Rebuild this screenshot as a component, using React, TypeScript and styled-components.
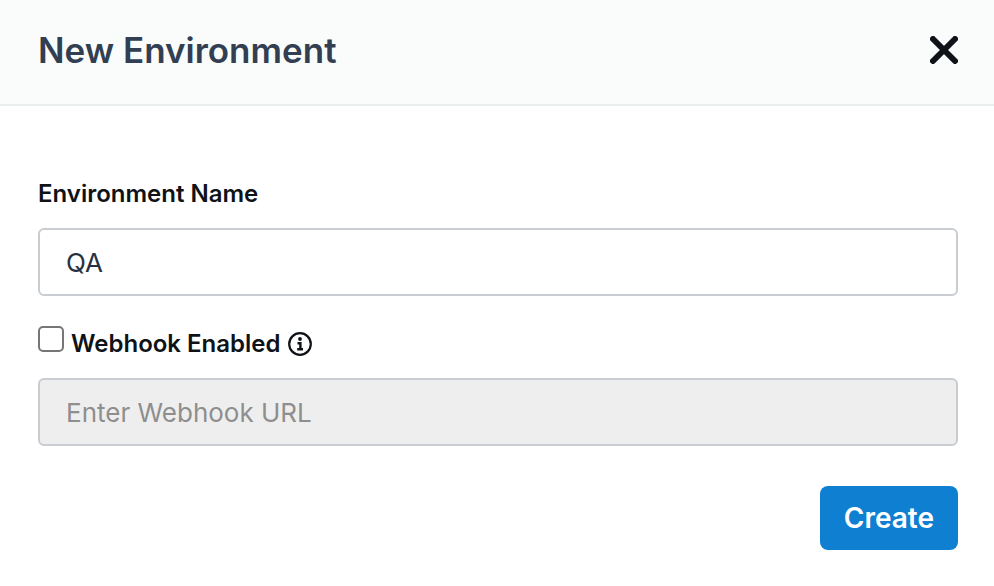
import React, { useState } from 'react';
import styled, { createGlobalStyle } from 'styled-components';

const GlobalStyle = createGlobalStyle`
  *, *::before, *::after { box-sizing: border-box; }
  body {
    margin: 0;
    background: #ffffff;
    color: #0f1317;
    font-family: Inter, "Liberation Sans", sans-serif;
  }
`;

const Dialog = styled.section`
  display: flex;
  flex-direction: column;
`;

const Header = styled.header`
  display: flex;
  align-items: center;
  justify-content: space-between;
  padding: 26px 36px 30px 38px;
  background: #fafcfc;
  border-bottom: 2px solid #ebeeee;
`;

const Title = styled.h1`
  margin: 0;
  font-size: 35px;
  line-height: 48px;
  font-weight: 600;
  color: #323f53;
`;

const CloseButton = styled.button`
  display: flex;
  padding: 0;
  border: 0;
  background: none;
  color: #0f1317;
  cursor: pointer;
`;

const Form = styled.form`
  display: flex;
  flex-direction: column;
  padding: 72px 36px 36px 38px;
`;

const Label = styled.label`
  font-size: 24px;
  line-height: 32px;
  font-weight: 600;
`;

const TextInput = styled.input`
  width: 100%;
  height: 68px;
  padding: 0 26px;
  border: 2px solid #c9cdd2;
  border-radius: 6px;
  background: #ffffff;
  color: #273142;
  font-family: inherit;
  font-size: 26px;
  &::placeholder { color: #8e8e8e; opacity: 1; }
  &:disabled { background: #eeeeee; }
`;

const NameInput = styled(TextInput)`
  margin-top: 18px;
`;

const CheckRow = styled.div`
  display: flex;
  align-items: center;
  gap: 7px;
  min-height: 36px;
  margin: 30px 0 16px;
`;

const Checkbox = styled.input`
  appearance: none;
  align-self: flex-start;
  width: 26px;
  height: 26px;
  margin: 0;
  border: 2px solid #767676;
  border-radius: 5px;
  background: #ffffff;
  &:checked { background: #0f7fd1; }
`;

const Actions = styled.div`
  display: flex;
  justify-content: flex-end;
  margin-top: 40px;
`;

const CreateButton = styled.button`
  height: 64px;
  padding: 0 24px;
  border: 0;
  border-radius: 8px;
  background: #0f7fd1;
  color: #ffffff;
  font-family: inherit;
  font-size: 28px;
  font-weight: 600;
  cursor: pointer;
`;

const CloseIcon = () => (
  <svg width="28" height="28" viewBox="0 0 28 28" fill="none" stroke="currentColor" strokeWidth="6" strokeLinecap="round" aria-hidden="true">
    <path d="M3 3 25 25M25 3 3 25" />
  </svg>
);

const InfoIcon = () => (
  <svg width="24" height="24" viewBox="0 0 24 24" fill="none" stroke="currentColor" strokeWidth="2.2" aria-hidden="true">
    <circle cx="12" cy="12" r="10.8" />
    <circle cx="12" cy="7" r="1.9" fill="currentColor" stroke="none" />
    <path d="M9.5 11.2h2.9v5.8M9.2 17.2h5.8" strokeWidth="2.4" />
  </svg>
);

export default function App() {
  const [name, setName] = useState('QA');
  const [webhook, setWebhook] = useState(false);
  return (
    <>
      <GlobalStyle />
      <Dialog role="dialog" aria-labelledby="title">
        <Header>
          <Title id="title">New Environment</Title>
          <CloseButton type="button" aria-label="Close">
            <CloseIcon />
          </CloseButton>
        </Header>
        <Form onSubmit={(e) => e.preventDefault()}>
          <Label htmlFor="name">Environment Name</Label>
          <NameInput id="name" value={name} onChange={(e) => setName(e.target.value)} />
          <CheckRow>
            <Checkbox id="webhook" type="checkbox" checked={webhook} onChange={(e) => setWebhook(e.target.checked)} />
            <Label htmlFor="webhook">Webhook Enabled</Label>
            <InfoIcon />
          </CheckRow>
          <TextInput aria-label="Webhook URL" placeholder="Enter Webhook URL" disabled={!webhook} />
          <Actions>
            <CreateButton type="submit">Create</CreateButton>
          </Actions>
        </Form>
      </Dialog>
    </>
  );
}
